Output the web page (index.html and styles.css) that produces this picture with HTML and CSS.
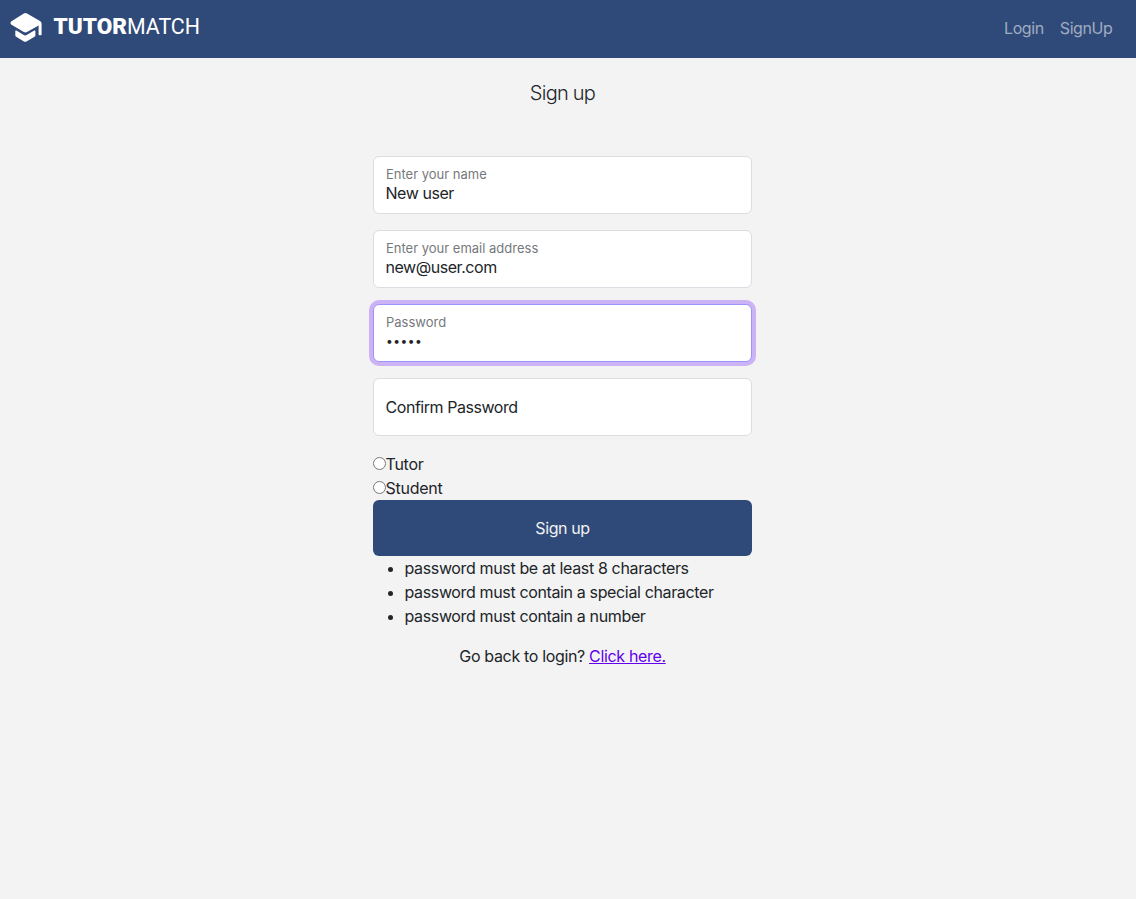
FILE: index.html
```html
<!DOCTYPE html>
<html lang="en">
<head>
<meta charset="utf-8">
<title>TutorMatch</title>
<link rel="stylesheet" href="styles.css">
</head>
<body>
<nav class="navbar">
  <a class="brand" href="#">
    <svg width="210" height="58" viewBox="0 0 210 58" role="img" aria-label="TutorMatch">
      <path class="mark" d="M23.8 13.5Q25.4 12.7 27 13.5L40 21.1Q41.6 22.1 41.6 24V34.5Q41.6 35.2 40.9 35.2H39.3Q38.6 35.2 38.6 34.5V25.5L27 32.1Q25.4 32.9 23.8 32.1L11.1 24.4Q9.6 23 11.1 21.6Z"/>
      <path class="mark" d="M15.3 31.2Q15.3 30 16.4 30.6L23.8 35Q25.2 35.8 26.6 35L34.3 30.6Q35.4 30 35.4 31.2V35.2Q35.4 36.2 34.5 36.8L26.5 41.5Q25.2 42.2 23.9 41.5L16.2 36.8Q15.3 36.2 15.3 35.2Z"/>
      <text class="word word-bold" x="53.5" y="34.3" textLength="73.5" lengthAdjust="spacingAndGlyphs">TUTOR</text>
      <text class="word" x="127" y="34.3" textLength="73" lengthAdjust="spacingAndGlyphs">MATCH</text>
    </svg>
  </a>
  <div class="nav-links">
    <a href="#">Login</a>
    <a href="#">SignUp</a>
  </div>
</nav>
<main class="signup">
  <h1 class="title">Sign up</h1>
  <form class="form">
    <label class="field"><span class="caption">Enter your name</span><input class="value" type="text" value="New user"></label>
    <label class="field"><span class="caption">Enter your email address</span><input class="value" type="text" value="new@user.com"></label>
    <label class="field focused"><span class="caption">Password</span><input class="value secret" type="password" value="abcde"></label>
    <label class="field empty"><span class="placeholder">Confirm Password</span></label>
    <label class="choice"><input class="radio" type="radio" name="role"><span class="role">Tutor</span></label>
    <label class="choice"><input class="radio" type="radio" name="role"><span class="role">Student</span></label>
    <button class="submit" type="button">Sign up</button>
  </form>
  <ul class="rules">
    <li>password must be at least 8 characters</li>
    <li>password must contain a special character</li>
    <li>password must contain a number</li>
  </ul>
  <p class="back">Go back to login? <a class="link" href="#">Click here.</a></p>
</main>
</body>
</html>
```
FILE: styles.css
```css
* { box-sizing: border-box; }
body {
  margin: 0;
  min-height: 100vh;
  background: #f3f3f3;
  color: #212529;
  font: 400 16px/24px Inter, "Liberation Sans", sans-serif;
  letter-spacing: -0.4px;
}
.navbar {
  height: 58px;
  display: flex;
  justify-content: space-between;
  align-items: center;
  padding-right: 23.5px;
  background: #2f4a79;
}
.brand { display: flex; }
.mark { fill: #fff; }
.word { font: 400 22px Roboto, sans-serif; letter-spacing: 0; fill: #fff; }
.word-bold { font-weight: 900; }
.nav-links { display: flex; gap: 16px; padding-bottom: 2px; }
.nav-links a { color: rgba(255, 255, 255, 0.55); text-decoration: none; }
.signup {
  width: 379px;
  margin-left: 373px;
  padding-top: 23px;
}
.title {
  margin: 0 0 51px;
  font-size: 20px;
  line-height: 24px;
  font-weight: 300;
  letter-spacing: -0.75px;
  text-align: center;
}
.form { display: flex; flex-direction: column; }
.field {
  display: flex;
  flex-direction: column;
  height: 58px;
  margin-bottom: 16px;
  padding: 9px 12px 0 11.5px;
  border: 1px solid #dcdce2;
  border-radius: 6px;
  background: #fff;
  letter-spacing: -0.45px;
}
.caption { padding-left: 0.5px; font-size: 13px; line-height: 17px; letter-spacing: 0; color: #76797c; }
.value {
  width: 100%;
  height: 20px;
  padding: 0;
  border: 0;
  outline: 0;
  background: transparent;
  color: #212529;
  font: inherit;
  line-height: 20px;
  letter-spacing: inherit;
}
.secret { padding-left: 0.5px; font-size: 12px; letter-spacing: 0.5px; }
.focused { border-color: #9a94fb; box-shadow: 0 0 0 4px #cbb3f5; }
.empty { padding-top: 0; justify-content: center; }
.choice { display: flex; height: 24px; }
.radio { width: 13px; height: 13px; margin: 5px 0 0; }
.role { margin-left: -0.5px; letter-spacing: -0.25px; }
.submit {
  height: 56px;
  padding: 0;
  border: 0;
  border-radius: 6px;
  background: #2f4a79;
  color: #f2f2f2;
  font: inherit;
  letter-spacing: inherit;
}
.rules { margin: 0 0 16px; padding-left: 31.5px; letter-spacing: -0.36px; }
.back { margin: 0; text-align: center; letter-spacing: -0.34px; }
.link { color: #6200ee; }
```
